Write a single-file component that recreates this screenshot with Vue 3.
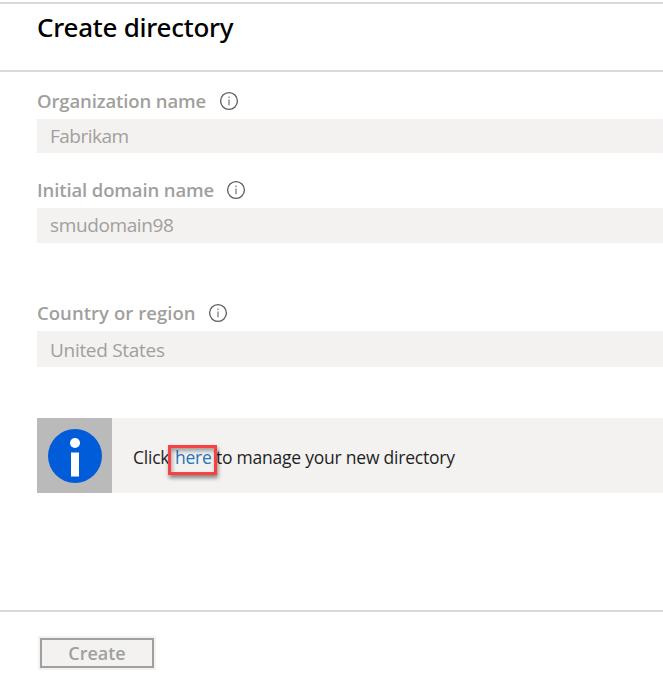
<script setup>
const fields = [
  { key: 'org', label: 'Organization name', value: 'Fabrikam' },
  { key: 'domain', label: 'Initial domain name', value: 'smudomain98' },
  { key: 'country', label: 'Country or region', value: 'United States' },
]
</script>

<template>
  <main class="panel">
    <header class="head"><h1 class="title">Create directory</h1></header>
    <section class="form">
      <div v-for="f in fields" :key="f.key" class="field" :class="f.key">
        <div class="label-row">
          <label class="label">{{ f.label }}</label>
          <svg class="hint" viewBox="0 0 20 20" width="20" height="20">
            <circle cx="10" cy="10" r="8.4" fill="none" stroke="#5c5c5c" stroke-width="1.3" />
            <path d="M10 8.4V14.2" stroke="#858585" stroke-width="1.4" />
            <path d="M10 5.6V7.1" stroke="#858585" stroke-width="1.4" />
          </svg>
        </div>
        <div class="input"><span class="value">{{ f.value }}</span></div>
      </div>
      <div class="notice">
        <div class="badge">
          <svg viewBox="0 0 54 54" width="54" height="54">
            <circle cx="27" cy="27" r="27" fill="#015cda" />
            <circle cx="27" cy="14" r="5" fill="#fff" />
            <rect x="23" y="23.5" width="8" height="24" fill="#fff" />
          </svg>
        </div>
        <p class="message"><span class="click">Click</span><span class="link-wrap"><a class="link">here</a><i class="mark"></i></span><span class="rest">to manage your new directory</span></p>
      </div>
    </section>
    <footer class="foot"><button class="create"><span>Create</span></button></footer>
  </main>
</template>

<style>
body { margin: 0; background: #fff; }
</style>

<style scoped>
.panel {
  box-sizing: border-box;
  height: 680px;
  padding-top: 2px;
  display: flex;
  flex-direction: column;
  overflow: hidden;
  font-family: "Open Sans", "Noto Sans", sans-serif;
}
.head {
  box-sizing: border-box;
  height: 70px;
  flex: none;
  padding-left: 37px;
  border-top: 2px solid #d9d9d9;
  border-bottom: 2px solid #d9d9d9;
}
.title {
  margin: 4px 0 0;
  font-family: "Noto Sans", sans-serif;
  font-size: 26px;
  letter-spacing: -.25px;
  line-height: 38px;
  font-weight: 500;
  color: #000;
  white-space: nowrap;
}
.form { flex: none; height: 538px; padding-left: 37px; }
.field { height: 89px; box-sizing: border-box; padding-top: 16px; }
.label-row { display: flex; align-items: center; height: 26px; }
.label {
  width: 182px;
  font-size: 18.5px;
  letter-spacing: -.12px;
  line-height: 26px;
  font-weight: 600;
  color: #a19f9d;
  white-space: nowrap;
}
.hint { flex: none; display: block; margin-top: -1px; }
.input {
  box-sizing: border-box;
  height: 34px;
  margin-top: 5px;
  padding-left: 13px;
  background: #f3f2f1;
  display: flex;
  align-items: center;
  font-size: 19px;
  letter-spacing: -.5px;
  color: #a19f9d;
}
.domain { height: 123px; }
.domain .label { width: 189px; }
.domain .input { height: 35px; letter-spacing: -.38px; }
.domain .value { margin-top: -2px; }
.country { height: 134px; }
.country .label { width: 171px; letter-spacing: .05px; }
.country .input { height: 36px; letter-spacing: -.3px; }
.country .value { margin-top: 1px; }
.notice { display: flex; height: 75px; background: #f3f2f1; }
.badge { width: 75px; background: #bababa; display: flex; align-items: center; justify-content: center; }
.message {
  margin: 2px 0 0 21px;
  display: flex;
  align-items: center;
  font-size: 17.5px;
  letter-spacing: -.23px;
  line-height: 24px;
  color: #1f1f1f;
  white-space: nowrap;
}
.click { width: 42px; }
.link-wrap { position: relative; width: 41px; }
.link { color: #2474b8; }
.mark {
  position: absolute;
  left: -7px;
  top: 0;
  box-sizing: border-box;
  width: 49px;
  height: 30px;
  border: 3px solid #f94144;
  box-shadow: 1px 3px 4px rgba(0, 0, 0, .45), inset 1px 3px 4px rgba(0, 0, 0, .35);
}
.foot {
  flex: 1;
  border-top: 2px solid #d9d9d9;
  padding: 24px 0 0 38px;
}
.create {
  display: block;
  box-sizing: border-box;
  width: 118px;
  height: 34px;
  padding: 0;
  border: 2px solid #f3f2f1;
  outline: 2px solid #a19f9d;
  outline-offset: -4px;
  background: #f3f2f1;
  font-family: inherit;
  font-size: 18px;
  line-height: 28px;
  font-weight: 600;
  color: #a19f9d;
}
</style>
